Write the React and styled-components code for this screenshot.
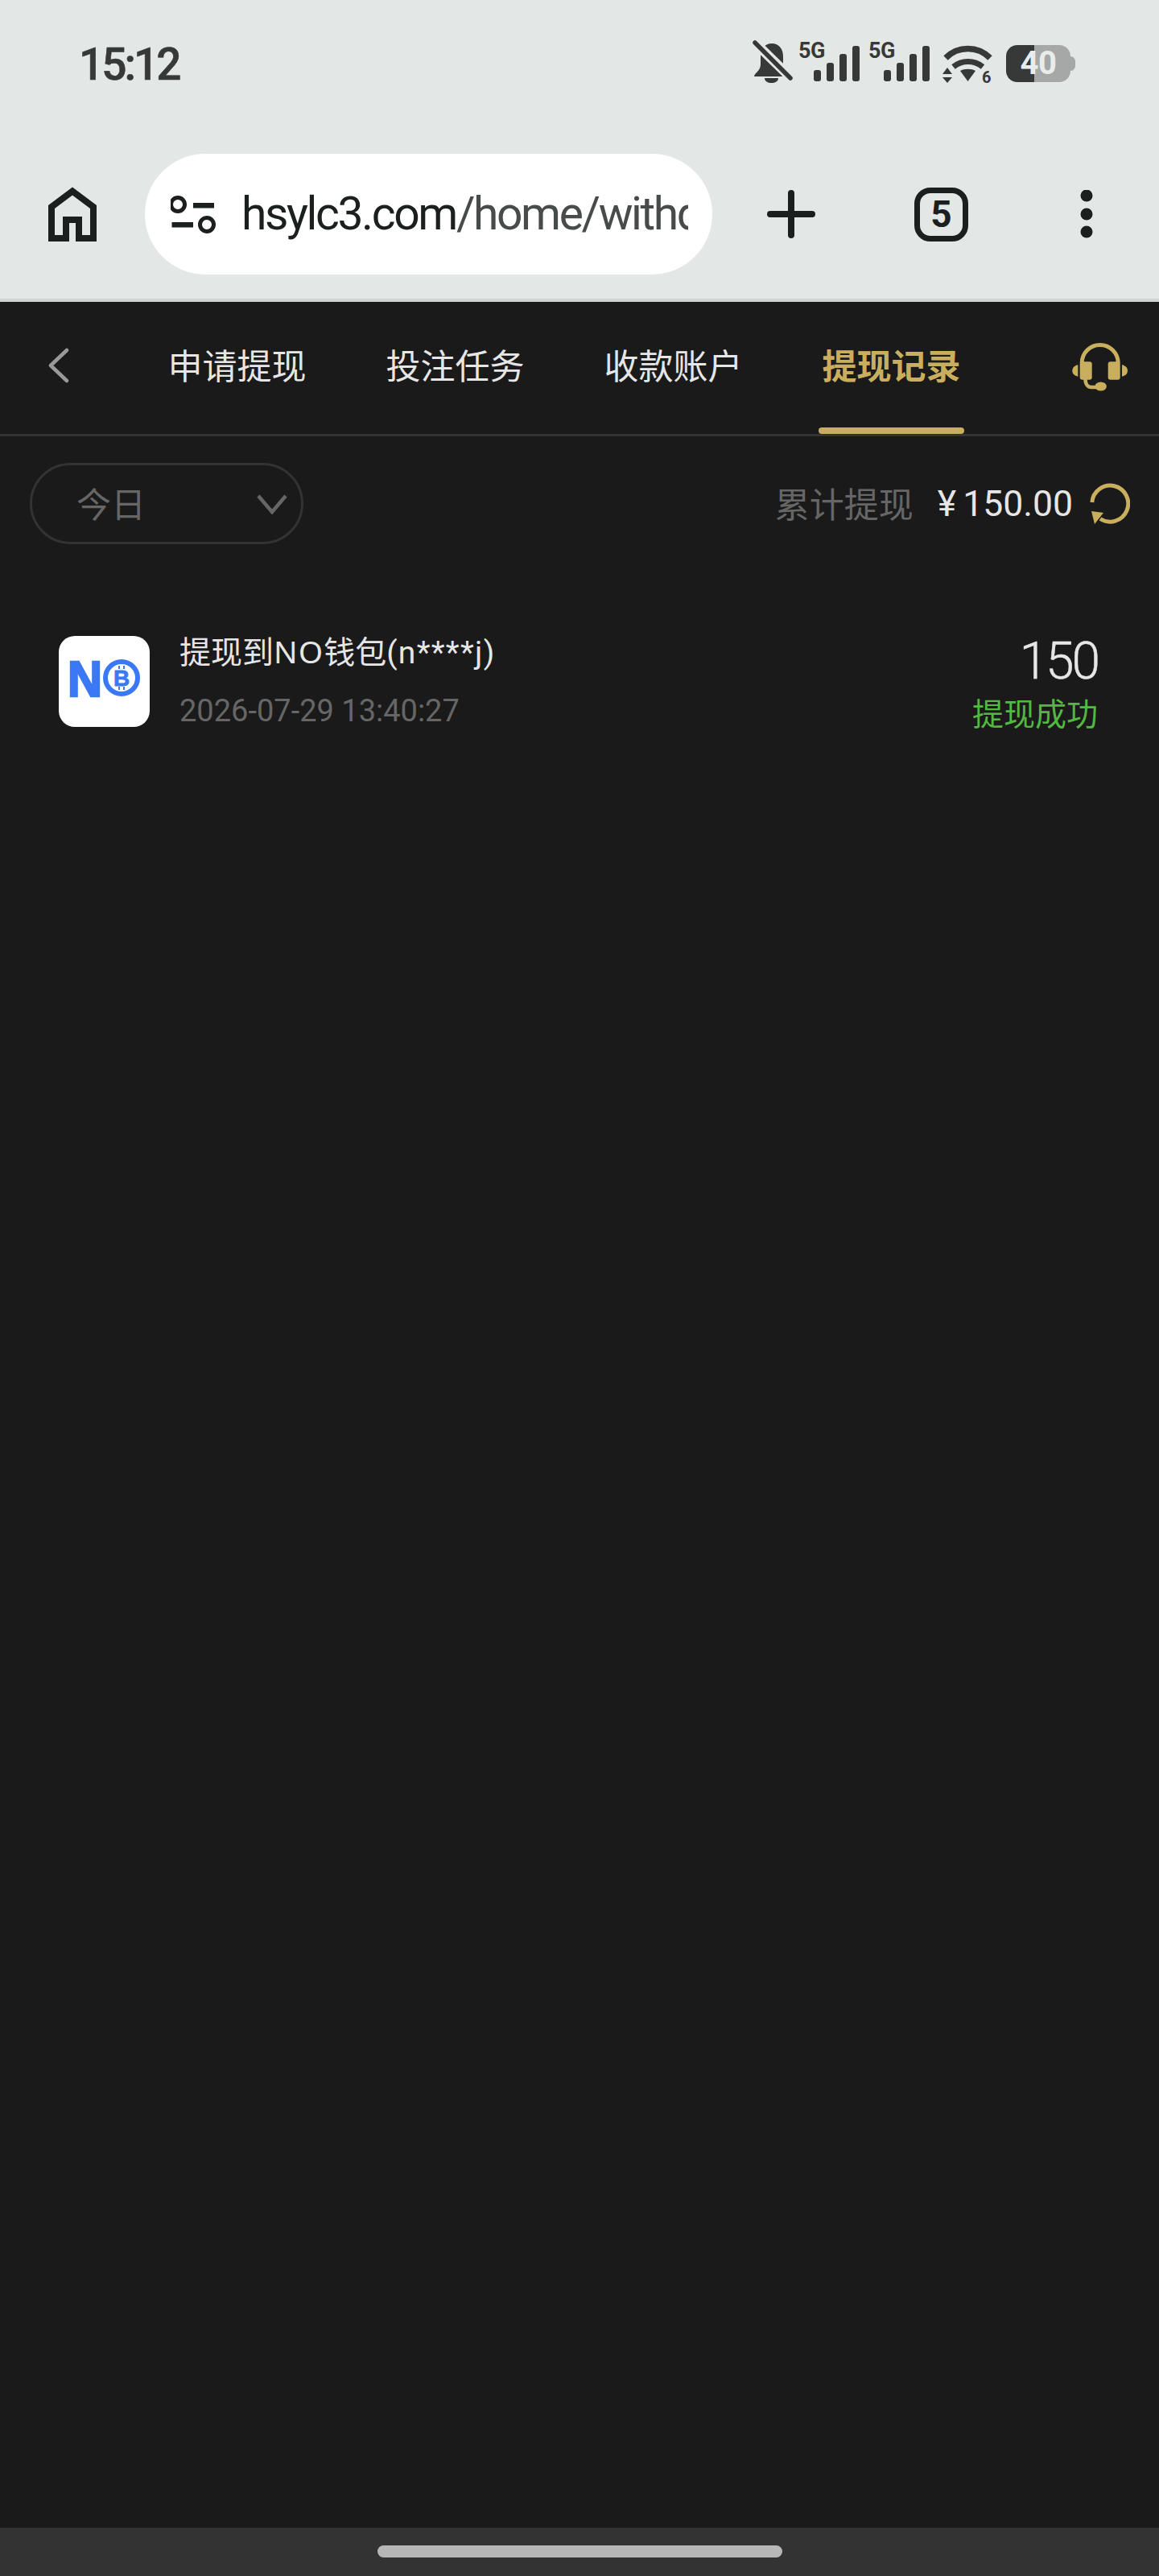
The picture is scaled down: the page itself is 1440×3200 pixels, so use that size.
import React from "react";
import styled, { createGlobalStyle } from "styled-components";

const CJK = `Roboto, "Noto Sans CJK SC", sans-serif`;
const INK = "#1b201f";
const STATUS = "#363938";
const GOLD = "#c9ae5e";

const Global = createGlobalStyle`
  html, body { margin: 0; padding: 0; background: #1a1a1a; }
  #root { width: 1440px; height: 3200px; }
  * { box-sizing: border-box; }
`;

const Page = styled.div`
  width: 1440px; height: 3200px; display: flex; flex-direction: column;
  background: #1a1a1a; font-family: ${CJK}; overflow: hidden;
`;
const Chrome = styled.header`
  height: 375px; background: #e3e7e6; border-bottom: 4px solid #cfd3d2;
  display: flex; flex-direction: column; flex: none;
`;
const StatusBar = styled.div`
  height: 161px; padding: 52px 104px 0 98px; display: flex; justify-content: space-between; align-items: flex-start;
`;
const Clock = styled.div`
  font-size: 55px; font-weight: 500; color: ${STATUS}; line-height: 56px; letter-spacing: -3px;
  -webkit-text-stroke: 0.6px ${STATUS};
`;
const StatusIcons = styled.div`
  display: flex; align-items: flex-start; height: 52px;
`;
const StatusIcon = styled.svg`
  display: block; flex: none; margin-left: ${(p) => p.$gap || 0}px; overflow: visible;
`;
const SmallText = styled.text`
  font-family: Roboto, sans-serif; font-weight: 700; fill: ${STATUS};
`;
const Battery = styled.div`
  position: relative; width: 80px; height: 46px; margin: 4px 6px 0 17px; border-radius: 14px;
  background: linear-gradient(90deg, ${STATUS} 0 35px, #a5a8a7 35px 100%);
  color: #e9eceb; font-size: 40px; font-weight: 700; line-height: 46px; text-align: center;
  letter-spacing: -0.5px;
  &::after {
    content: ""; position: absolute; right: -6px; top: 14px; width: 6px; height: 18px;
    background: #a5a8a7; border-radius: 0 6px 6px 0;
  }
`;
const Toolbar = styled.div`
  height: 210px; padding-left: 60px; display: flex; align-items: center;
`;
const ToolIcon = styled.svg`
  display: block; flex: none; margin-left: ${(p) => p.$gap || 0}px;
`;
const Omnibox = styled.div`
  width: 705px; height: 150px; margin-left: 60px; border-radius: 75px; background: #fff;
  display: flex; align-items: center; padding-left: 32px; flex: none;
`;
const UrlClip = styled.div`
  width: 555px; flex: none; margin-left: 32px; overflow: hidden; white-space: nowrap;
  font-size: 57px; line-height: 76px; color: #474b4a; letter-spacing: -2.4px;
  b { font-weight: 400; color: ${INK}; }
`;
const TabCount = styled.div`
  width: 67px; height: 67px; margin-left: 123px; border: 7px solid ${INK}; border-radius: 20px; flex: none;
  display: flex; align-items: center; justify-content: center;
  font-size: 46px; font-weight: 700; color: ${INK}; line-height: 1;
`;
const Nav = styled.nav`
  height: 167px; border-bottom: 3px solid #333; display: flex; align-items: center; flex: none; padding-left: 60px;
`;
const Tabs = styled.div`
  display: flex; gap: 90px; height: 100%; margin-left: 118px; flex: none;
`;
const Tab = styled.div`
  position: relative; padding: 0 0 11px; width: 181px; display: flex; align-items: center; justify-content: center;
  font-size: 43px; white-space: nowrap; font-weight: ${(p) => (p.$active ? 700 : 400)};
  color: ${(p) => (p.$active ? GOLD : "#e6e6e6")};
  ${(p) => p.$active && `&::after { content: ""; position: absolute; left: 0; right: 0; bottom: 0; height: 8px; border-radius: 4px; background: ${GOLD}; }`}
`;
const NavIcon = styled.svg`
  display: block; flex: none; margin-left: ${(p) => p.$gap || 0}px; margin-top: ${(p) => p.$top || 0}px;
`;
const FilterRow = styled.div`
  display: flex; justify-content: space-between; align-items: center; padding: 33px 36px 0 37px; flex: none;
`;
const Select = styled.div`
  width: 340px; height: 101px; border: 3px solid #333; border-radius: 51px; display: flex; align-items: center;
  justify-content: space-between; padding: 0 16px 0 55px; color: #666; font-size: 43px;
  span { margin-top: -3px; }
`;
const Summary = styled.div`
  display: flex; align-items: center;
`;
const SummaryLabel = styled.span`
  font-size: 43px; color: #666; margin-top: -3px;
`;
const SummaryValue = styled.span`
  margin-left: 30px; font-size: 44.5px; color: #e6e6e6; font-weight: 400; white-space: nowrap;
  i { font-style: normal; margin-right: 8px; }
`;
const Record = styled.div`
  display: flex; align-items: center; margin-top: 102px; padding: 0 76px 0 73px; flex: none;
`;
const Logo = styled.div`
  width: 113px; height: 113px; background: #fff; border-radius: 20px; flex: none;
`;
const RecordInfo = styled.div`
  margin-left: 37px; flex: 1; display: flex; flex-direction: column; gap: 24px; padding-bottom: 4px;
`;
const RecordTitle = styled.div`
  font-size: 39px; line-height: 52px; color: #e6e6e6; white-space: nowrap;
`;
const WalletName = styled.span`
  font-family: "Noto Sans", sans-serif; letter-spacing: 1px;
`;
const Masked = styled.span`
  letter-spacing: 1.3px;
`;
const RecordDate = styled.div`
  font-size: 38px; line-height: 44px; color: #666; white-space: nowrap;
`;
const RecordSide = styled.div`
  display: flex; flex-direction: column; align-items: flex-end; gap: 4px; padding-top: 8px;
`;
const Amount = styled.div`
  font-size: 64px; line-height: 72px; font-weight: 300; color: #e6e6e6; letter-spacing: -3px;
  -webkit-text-stroke: 0.4px #e6e6e6;
`;
const StatusLabel = styled.div`
  font-size: 39px; line-height: 52px; color: #52b83f;
`;
const Spacer = styled.div`
  flex: 1;
`;
const HomeBar = styled.div`
  height: 60px; background: #333; display: flex; justify-content: center; padding-top: 22px; flex: none;
`;
const HomeHandle = styled.div`
  width: 503px; height: 15px; border-radius: 8px; background: #b7b7b7;
`;

const Signal = ({ gap }) => (
  <StatusIcon $gap={gap} width="76" height="52" viewBox="0 0 76 52">
    <SmallText x="0" y="20" fontSize="27" letterSpacing="-0.5">5G</SmallText>
    <g fill={STATUS}>
      <rect x="19" y="35" width="9" height="14" rx="3" />
      <rect x="35" y="26" width="9" height="23" rx="3" />
      <rect x="51" y="15" width="9" height="34" rx="3" />
      <rect x="67" y="5" width="9" height="44" rx="3" />
    </g>
  </StatusIcon>
);

export default function App() {
  return (
    <Page>
      <Global />
      <Chrome>
        <StatusBar>
          <Clock>15:12</Clock>
          <StatusIcons>
            <StatusIcon width="48" height="52" viewBox="0 0 48 52">
              <defs>
                <mask id="bellcut" maskUnits="userSpaceOnUse" x="-2" y="-2" width="52" height="56">
                  <rect x="-2" y="-2" width="52" height="56" fill="#fff" />
                  <path d="M1 0L47 45" stroke="#000" strokeWidth="12" />
                </mask>
              </defs>
              <path mask="url(#bellcut)" fill={STATUS} d="M23 2C32 2 37 9 37 18V35L41 43H1C1 39 9 36 9 28V18C9 9 14 2 23 2Z" />
              <path fill={STATUS} d="M14 45H31C31 49 27 51 22.5 51S14 49 14 45Z" />
              <path d="M2 1L46 45" stroke={STATUS} strokeWidth="5.5" strokeLinecap="round" />
            </StatusIcon>
            <Signal gap={8} />
            <Signal gap={11} />
            <StatusIcon $gap={16} width="62" height="52" viewBox="0 0 62 52">
              <g fill="none" stroke={STATUS}>
                <path d="M4 20A38.6 38.6 0 0 1 59 20" strokeWidth="7.5" />
                <path d="M13.5 31A29 29 0 0 1 50 31" strokeWidth="7" />
              </g>
              <path fill={STATUS} d="M22 36C27 33 36 33 41 36L31.5 49Z" />
              <path fill={STATUS} d="M6 32L12 40H0ZM0 44H12L6 51Z" />
              <SmallText x="49" y="51" fontSize="20">6</SmallText>
            </StatusIcon>
            <Battery>40</Battery>
          </StatusIcons>
        </StatusBar>
        <Toolbar>
          <ToolIcon width="60" height="68" viewBox="0 0 60 68">
            <path d="M22 64V41H38V64H56V25L30 5.5L4 25V64Z" fill="none" stroke={INK} strokeWidth="8" />
          </ToolIcon>
          <Omnibox>
            <svg width="56" height="47" viewBox="0 0 56 47" style={{ flex: "none" }}>
              <g fill="none" stroke={INK} strokeWidth="5">
                <circle cx="9" cy="11" r="8.5" />
                <circle cx="45" cy="36" r="8.5" />
              </g>
              <g fill={INK}>
                <rect x="28" y="9" width="26" height="6.5" />
                <rect x="1.5" y="33" width="26.5" height="6.5" />
              </g>
            </svg>
            <UrlClip><b>hsylc3.com</b>/home/withdraw</UrlClip>
          </Omnibox>
          <ToolIcon $gap={68} width="60" height="60" viewBox="0 0 60 60">
            <path d="M30 4V56M4 30H56" stroke={INK} strokeWidth="8" strokeLinecap="round" />
          </ToolIcon>
          <TabCount>5</TabCount>
          <ToolIcon $gap={139} width="16" height="60" viewBox="0 0 16 60">
            <g fill={INK}>
              <ellipse cx="8" cy="7" rx="7.5" ry="7.5" />
              <ellipse cx="8" cy="30" rx="7.5" ry="7.5" />
              <ellipse cx="8" cy="52" rx="7.5" ry="7.5" />
            </g>
          </ToolIcon>
        </Toolbar>
      </Chrome>

      <Nav>
        <NavIcon width="26" height="44" viewBox="0 0 26 44" $top={-6}>
          <path d="M23 3L3 22L23 41" fill="none" stroke="#999" strokeWidth="4.5" strokeLinecap="round" strokeLinejoin="round" />
        </NavIcon>
        <Tabs>
          <Tab>申请提现</Tab>
          <Tab>投注任务</Tab>
          <Tab>收款账户</Tab>
          <Tab $active>提现记录</Tab>
        </Tabs>
        <NavIcon $gap={134} $top={-2} width="69" height="60" viewBox="0 0 69 60">
          <g fill={GOLD}>
            <rect x="9.7" y="23.3" width="15" height="22.4" rx="3" />
            <rect x="44.7" y="23.3" width="15" height="22.4" rx="3" />
            <path d="M7.3 27.3V41.7C3 41 .3 38 .3 34.5S3 28 7.3 27.3Z" />
            <path d="M62 27.3V41.7C66.3 41 69 38 69 34.5S66.3 28 62 27.3Z" />
            <ellipse cx="35.7" cy="54" rx="7.2" ry="5.6" />
          </g>
          <path d="M12.2 25A22.5 22.5 0 0 1 57.2 25" fill="none" stroke={GOLD} strokeWidth="5" />
          <path d="M16.5 45C16.5 52 20 55 24 55H32" fill="none" stroke={GOLD} strokeWidth="4.5" />
        </NavIcon>
      </Nav>

      <FilterRow>
        <Select>
          <span>今日</span>
          <svg width="40" height="26" viewBox="0 0 40 26" style={{ display: "block" }}>
            <path d="M3 3L20 23L37 3" fill="none" stroke="#666" strokeWidth="4.5" />
          </svg>
        </Select>
        <Summary>
          <SummaryLabel>累计提现</SummaryLabel>
          <SummaryValue><i>¥</i>150.00</SummaryValue>
          <NavIcon $gap={21} width="50" height="51" viewBox="0 0 50 51">
            <path d="M2.8 24A22.5 22.5 0 1 1 13 44.5" fill="none" stroke={GOLD} strokeWidth="5" />
            <path fill={GOLD} d="M2 35L17 37L6 51Z" />
          </NavIcon>
        </Summary>
      </FilterRow>

      <Record>
        <Logo>
          <svg width="113" height="113" viewBox="0 0 113 113" style={{ display: "block" }}>
            <text x="11" y="75" fontFamily="Liberation Sans, sans-serif" fontWeight="700" fontSize="63" fill="#3b78f5" stroke="#3b78f5" strokeWidth="2.5" textLength="43" lengthAdjust="spacingAndGlyphs">N</text>
            <circle cx="78" cy="52" r="20" fill="none" stroke="#3b78f5" strokeWidth="6" />
            <text x="78" y="62" textAnchor="middle" fontFamily="Liberation Sans, sans-serif" fontWeight="700" fontSize="28" fill="#3b78f5" stroke="#3b78f5" strokeWidth="0.8">B</text>
            <path d="M75 37V41M81 37V41M75 63V67M81 63V67" stroke="#3b78f5" strokeWidth="2" />
          </svg>
        </Logo>
        <RecordInfo>
          <RecordTitle>提现到<WalletName>NO</WalletName>钱包<Masked>(n****j)</Masked></RecordTitle>
          <RecordDate>2026-07-29 13:40:27</RecordDate>
        </RecordInfo>
        <RecordSide>
          <Amount>150</Amount>
          <StatusLabel>提现成功</StatusLabel>
        </RecordSide>
      </Record>
      <Spacer />
      <HomeBar>
        <HomeHandle />
      </HomeBar>
    </Page>
  );
}
